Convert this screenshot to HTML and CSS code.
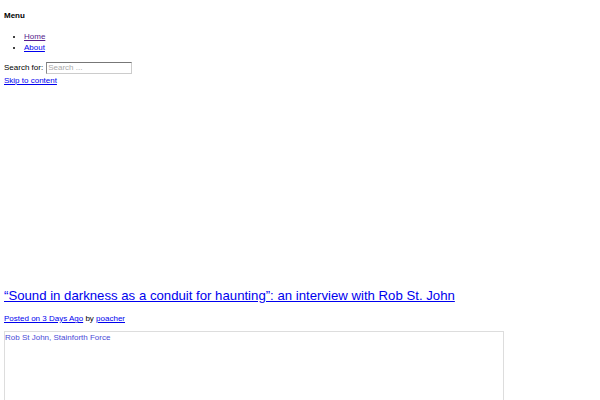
FILE: index.html
```html
<!DOCTYPE html>
<html lang="en">
<head>
    <meta charset="UTF-8">
    <title>Rob St. John interview</title>
    <link rel="stylesheet" href="styles.css">
</head>
<body>
    <nav class="site-nav">
        <h2 class="menu-title">Menu</h2>
        <ul class="menu">
            <li><a class="visited" href="#">Home</a></li>
            <li><a href="#">About</a></li>
        </ul>
    </nav>

    <form class="search-form">
        <label for="s">Search for:</label>
        <input type="search" id="s" class="search-field" placeholder="Search ...">
    </form>
    <a class="skip-link" href="#content">Skip to content</a>

    <div class="site-banner"></div>

    <article id="content" class="post">
        <h1 class="post-title"><a href="#">“Sound in darkness as a conduit for haunting”: an interview with Rob St. John</a></h1>
        <p class="post-meta"><a href="#">Posted on 3 Days Ago</a> by <a href="#">poacher</a></p>
        <div class="post-image">
            <span class="alt-text">Rob St John, Stainforth Force</span>
        </div>
    </article>
</body>
</html>
```

FILE: styles.css
```css
body {
    margin: 4px;
    font-family: "Liberation Sans", Arial, sans-serif;
    font-size: 8px;
    line-height: 11px;
    color: #000;
    background: #fff;
}
a {
    color: #0000ee;
}
a.visited {
    color: #551a8b;
}
.menu-title {
    font-size: 8px;
    font-weight: bold;
    margin: 6px 0 10px;
}
.menu {
    margin: 0 0 8px;
    padding-left: 20px;
}
.search-form {
    display: flex;
    align-items: center;
    gap: 3px;
    height: 13px;
}
.search-field {
    width: 86px;
    height: 12px;
    box-sizing: border-box;
    margin: 0;
    padding: 0 1px;
    font-family: inherit;
    font-size: 8px;
    border: 1px solid #ccc;
    border-top-color: #777;
    border-left-color: #888;
}
.search-field::placeholder {
    color: #aaa;
}
.skip-link {
    display: block;
    margin-top: 1px;
}
.site-banner {
    height: 192px;
}
.post-title {
    font-size: 13.2px;
    line-height: 15px;
    font-weight: normal;
    margin: 10px 0 10px;
}
.post-meta {
    margin: 0 0 7px;
}
.post-image {
    width: 500px;
    height: 300px;
    box-sizing: border-box;
    border: 1px solid #ddd;
    padding: 0;
}
.alt-text {
    color: #4a4ad8;
}
```
